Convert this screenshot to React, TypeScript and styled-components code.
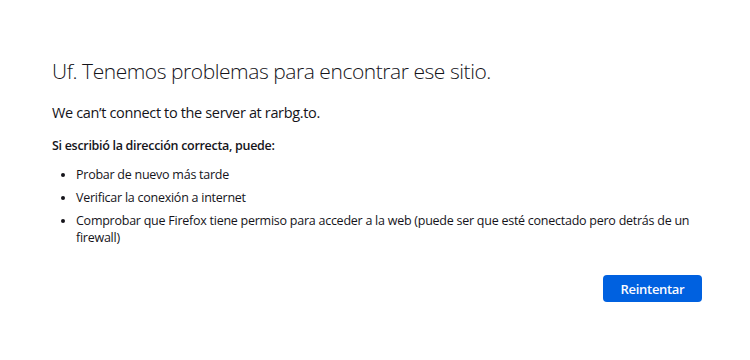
import React from "react";
import styled, { createGlobalStyle } from "styled-components";

const GlobalStyle = createGlobalStyle`
  html, body {
    margin: 0;
    padding: 0;
    background: #ffffff;
  }
  body {
    font-family: "Open Sans", "Noto Sans", sans-serif;
    color: #15141a;
  }
`;

const Page = styled.div`
  width: 750px;
  height: 360px;
  box-sizing: border-box;
  padding: 55px 48px 0 52px;
`;

const Container = styled.div`
  width: 650px;
  display: flex;
  flex-direction: column;
`;

const Title = styled.h1`
  margin: 0;
  font-size: 21px;
  font-weight: 300;
  line-height: 32px;
  letter-spacing: -0.45px;
`;

const Intro = styled.p`
  margin: 16px 0 0;
  font-size: 14.5px;
  line-height: 20px;
  letter-spacing: -0.35px;
`;

const Lead = styled.p`
  margin: 13px 0 0;
  font-size: 12.5px;
  font-weight: 600;
  line-height: 20px;
  letter-spacing: -0.3px;
`;

const List = styled.ul`
  margin: 10px 0 0;
  padding: 0 0 0 24px;
  font-size: 12.5px;
  line-height: 17px;
  letter-spacing: -0.25px;
`;

const Item = styled.li`
  margin-bottom: 6px;
`;

const Actions = styled.div`
  display: flex;
  justify-content: flex-end;
  margin-top: 23px;
`;

const Button = styled.button`
  width: 99px;
  height: 27px;
  border: none;
  border-radius: 4px;
  background: #0061e0;
  color: #fbfbfe;
  font-family: "Open Sans", "Noto Sans", sans-serif;
  font-size: 13px;
  font-weight: 600;
  letter-spacing: -0.3px;
  cursor: pointer;
`;

export default function App() {
  return (
    <>
      <GlobalStyle />
      <Page>
        <Container>
          <Title>Uf. Tenemos problemas para encontrar ese sitio.</Title>
          <Intro>We can’t connect to the server at rarbg.to.</Intro>
          <Lead>Si escribió la dirección correcta, puede:</Lead>
          <List>
            <Item>Probar de nuevo más tarde</Item>
            <Item>Verificar la conexión a internet</Item>
            <Item>
              Comprobar que Firefox tiene permiso para acceder a la web (puede
              ser que esté conectado pero detrás de un firewall)
            </Item>
          </List>
          <Actions>
            <Button>Reintentar</Button>
          </Actions>
        </Container>
      </Page>
    </>
  );
}
